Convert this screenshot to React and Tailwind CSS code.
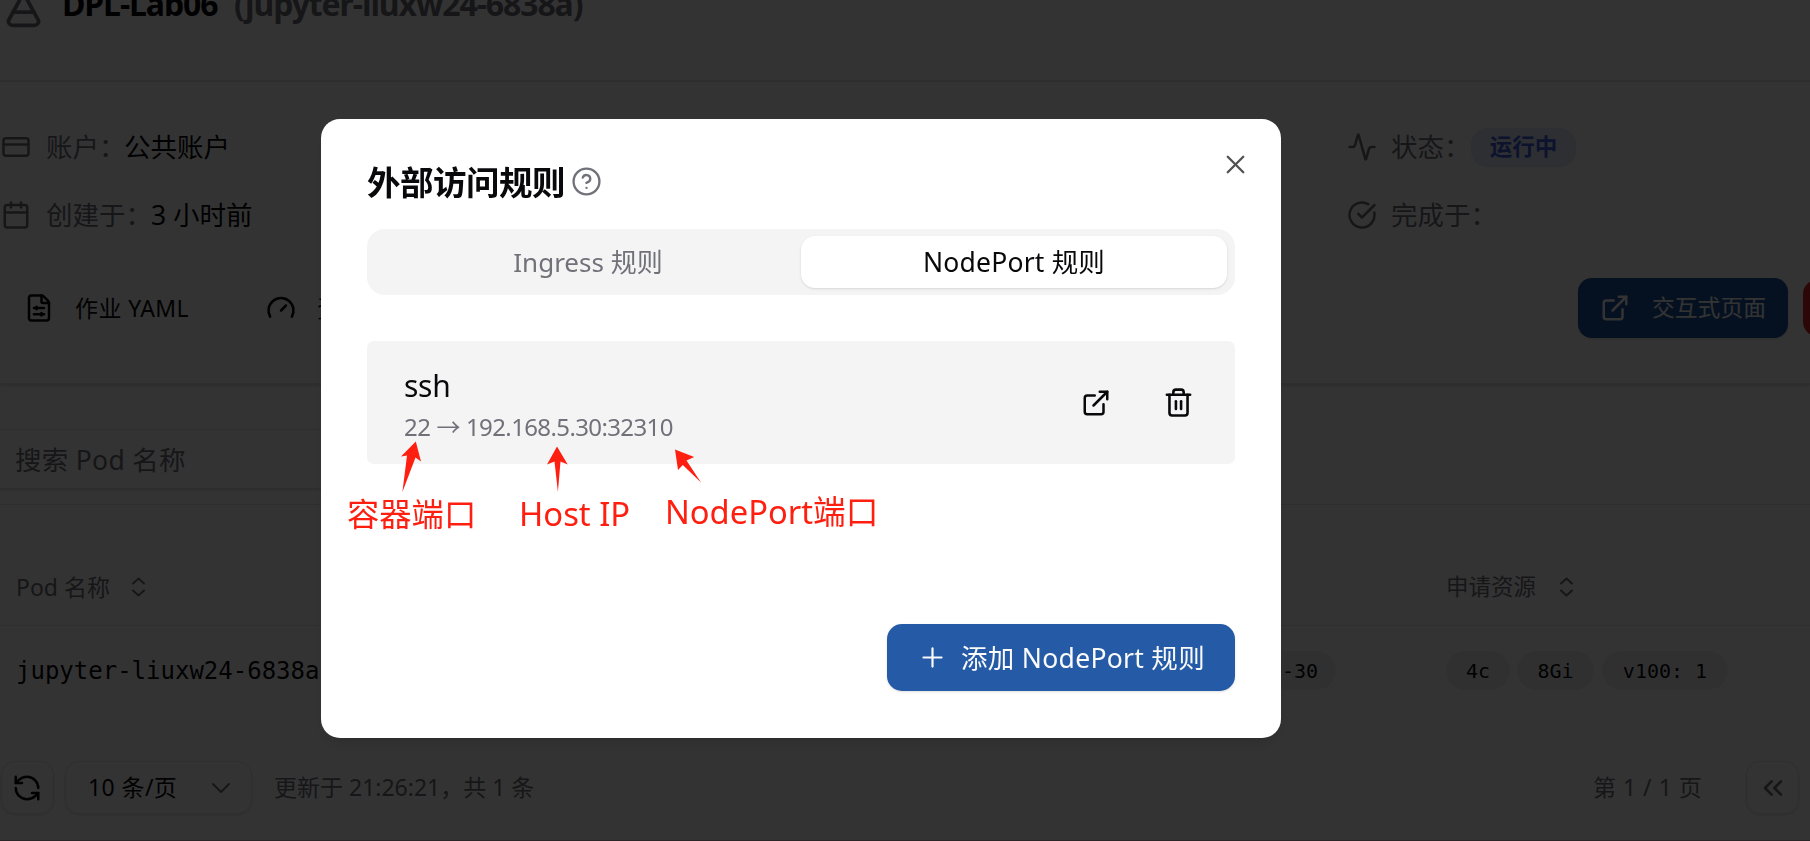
import React from "react";
import {
  Activity, Calendar, ChevronDown, ChevronsLeft, CircleCheckBig, CircleHelp, CreditCard,
  ExternalLink, FileSliders, FlaskConical, Gauge, Plus, RefreshCcw, Trash2, X,
} from "lucide-react";

function SortIcon() {
  return (
    <svg width="15" height="20" viewBox="0 0 15 20" fill="none" stroke="currentColor" strokeWidth="2" strokeLinecap="round" strokeLinejoin="round">
      <path d="M2 6.500 7.500 1.500 13 6.500M2 13.500l5.500 5L13 13.500" />
    </svg>
  );
}

function Badge({ children, className }) {
  return (
    <span className={"flex h-[39px] items-center justify-center rounded-[20px] bg-[#f1f1f2] font-['DejaVu_Sans_Mono',monospace] text-[20px] " + className}>
      {children}
    </span>
  );
}

function JobHeader() {
  return (
    <header className="flex h-[82px] items-start border-b-2 border-[#e4e4e7] pl-[1px]">
      <FlaskConical className="-mt-[16px] shrink-0 text-[#71717a]" size={45} strokeWidth={2} />
      <h1 className="-mt-[18px] ml-[16px] flex text-[32px] leading-[44px] font-bold tracking-[-1.1px]">
        <span className="w-[172px]">DPL-Lab06</span>
        <span className="text-[#71717a]">(jupyter-liuxw24-6838a)</span>
      </h1>
    </header>
  );
}

function JobInfo() {
  return (
    <section className="h-[303px] border-b-2 border-[#e4e4e7] pt-[31px] shadow-sm">
      <div className="flex h-[68px] items-center text-[26.5px]">
        <CreditCard className="ml-[1px] shrink-0 text-[#71717a]" size={30} />
        <span className="ml-[15px] w-[78px] shrink-0 pt-[2px] text-[#71717a]">账户：</span>
        <span className="w-[1223px] shrink-0 pt-[2px]">公共账户</span>
        <Activity className="shrink-0 text-[#71717a]" size={30} />
        <span className="ml-[14px] w-[80px] shrink-0 pt-[2px] text-[#71717a]">状态：</span>
        <span className="flex h-[39px] w-[105px] shrink-0 items-center justify-center rounded-[16px] bg-[#e4eafa] text-[22.5px] font-bold text-[#4062e0]">运行中</span>
      </div>
      <div className="flex h-[68px] items-center text-[26.5px]">
        <Calendar className="ml-[1px] shrink-0 text-[#71717a]" size={30} />
        <span className="ml-[15px] w-[105px] shrink-0 pt-[2px] text-[#71717a]">创建于：</span>
        <span className="w-[1196px] shrink-0 pt-[2px]">3 小时前</span>
        <CircleCheckBig className="shrink-0 text-[#71717a]" size={30} />
        <span className="ml-[14px] shrink-0 pt-[2px] text-[#71717a]">完成于：</span>
      </div>
      <div className="mt-[29px] flex h-[60px] items-center text-[23px]">
        <FileSliders className="ml-[24px] shrink-0" size={30} />
        <span className="ml-[21px] w-[191px] shrink-0 tracking-[0.4px]">作业 YAML</span>
        <Gauge className="shrink-0" size={30} />
        <span className="ml-[21px] w-[1261px] shrink-0">资源监控</span>
        <button className="flex h-[60px] w-[210px] shrink-0 items-center rounded-[14px] bg-[#1a56a0] pl-[22px] text-white shadow-sm">
          <ExternalLink size={30} />
          <span className="ml-[22px] text-[22.8px]">交互式页面</span>
        </button>
        <div className="ml-[15px] h-[56px] w-[60px] shrink-0 rounded-[14px] bg-[#dc2626]" />
      </div>
    </section>
  );
}

function PodTable() {
  return (
    <section>
      <div className="h-[119px] pt-[44px]">
        <div className="-ml-[2px] flex h-[60px] w-[600px] items-center border border-[#e4e4e7] pt-[3px] pl-[16px] text-[26.5px] tracking-[0.300px] text-[#71717a] shadow-sm">搜索 Pod 名称</div>
      </div>
      <div className="flex h-[122px] items-center border-y border-[#e4e4e7] pt-[44px] text-[23px] text-[#71717a]">
        <span className="ml-[16px] w-[115px]">Pod 名称</span>
        <SortIcon />
        <span className="ml-[1300px] w-[113px] text-[22.5px]">申请资源</span>
        <SortIcon />
      </div>
      <div className="flex h-[89px] items-center">
        <span className="ml-[16px] w-[1200px] font-['DejaVu_Sans_Mono',monospace] text-[24px]">jupyter-liuxw24-6838a</span>
        <Badge className="w-[120px]">node-30</Badge>
        <Badge className="ml-[110px] w-[64px]">4c</Badge>
        <Badge className="ml-[7px] w-[77px]">8Gi</Badge>
        <Badge className="ml-[8px] w-[126px]">v100: 1</Badge>
      </div>
    </section>
  );
}

function Pager() {
  return (
    <footer className="mt-[46px] flex h-[53px] items-center text-[23px]">
      <button className="ml-[1px] flex h-[53px] w-[53px] items-center justify-center rounded-[14px] border border-[#e4e4e7] pr-[2px] shadow-sm">
        <RefreshCcw size={30} />
      </button>
      <button className="ml-[11px] flex h-[53px] w-[187px] items-center rounded-[14px] border border-[#e4e4e7] pl-[22px] shadow-sm">
        <span className="w-[117px] text-left tracking-[0.400px]">10 条/页</span>
        <ChevronDown className="text-[#71717a]" size={32} strokeWidth={1.5} />
      </button>
      <span className="ml-[22px] w-[1319px] text-[#71717a]">更新于 21:26:21，共 1 条</span>
      <span className="w-[153px] tracking-[0.500px] text-[#71717a]">第 1 / 1 页</span>
      <button className="flex h-[53px] w-[53px] items-center justify-center rounded-[14px] border border-[#e4e4e7] text-[#71717a] shadow-sm">
        <ChevronsLeft size={32} />
      </button>
    </footer>
  );
}

function Annotations() {
  return (
    <div className="pointer-events-none absolute top-0 left-0 text-[#ff1f10]">
      <svg className="absolute top-0 left-0" width="960" height="619" fill="currentColor">
        <path d="M94.800 322.500 100 342.500 94.500 338.500 81.400 373 86 336.500 80 337.500Z" />
        <path d="M236 327.500 246.700 345.500 239.500 342.500 236.900 373 233.500 342.500 226 345.500Z" />
        <path d="M354 330.500 373.200 338 365.500 341.500 380 363.500 361.800 346 357 351Z" />
      </svg>
      <span className="absolute top-[374px] left-[26px] text-[32.3px] leading-[40px] whitespace-nowrap">容器端口</span>
      <span className="absolute top-[375px] left-[198px] text-[32.8px] leading-[40px] whitespace-nowrap">Host IP</span>
      <span className="absolute top-[373px] left-[344px] text-[32.7px] leading-[40px] whitespace-nowrap">NodePort端口</span>
    </div>
  );
}

function RulesDialog() {
  return (
    <div className="fixed inset-0 flex items-start bg-black/80 pt-[118.5px] pl-[321px]">
      <div className="relative h-[619px] w-[960px] rounded-[19px] bg-white px-[46px] shadow-lg">
        <X className="absolute top-[30px] right-[30px] text-[#525254]" size={31} strokeWidth={1.8} />
        <div className="flex h-[110.5px] items-center pt-[17px]">
          <h2 className="w-[204px] text-[33.5px] leading-[40px] font-bold tracking-[-0.5px]">外部访问规则</h2>
          <CircleHelp className="-mt-[1px] text-[#71717a]" size={31} strokeWidth={1.8} />
        </div>
        <div className="flex h-[66px] items-center justify-between rounded-[18px] bg-[#f4f4f5] px-[8px] text-[26px]">
          <span className="flex h-[52px] w-[426px] items-center justify-center text-[#71717a]">Ingress 规则</span>
          <span className="flex h-[52px] w-[426px] items-center justify-center rounded-[14px] bg-white pt-[2px] text-[26.5px] tracking-[0.200px] shadow">NodePort 规则</span>
        </div>
        <div className="mt-[46px] flex h-[123px] items-center rounded-[7px] bg-[#f4f4f5] pl-[37px]">
          <div className="w-[677px] pt-[7px]">
            <div className="text-[30px] leading-[42px] tracking-[-0.300px]">ssh</div>
            <div className="flex text-[24px] leading-[40px] text-[#71717a]">
              <span className="w-[62px] tracking-[-0.400px]">22 →</span>
              <span className="tracking-[-0.620px]">192.168.5.30:32310</span>
            </div>
          </div>
          <ExternalLink size={30} />
          <Trash2 className="ml-[52px]" size={31} />
        </div>
        <div className="mt-[160px] flex justify-end">
          <button className="flex h-[67px] w-[348px] items-center rounded-[15px] bg-[#255ba6] pl-[30px] text-[26.5px] tracking-[0.300px] text-[#fafafa] shadow">
            <Plus size={31} strokeWidth={1.7} />
            <span className="ml-[13px] pt-[2px] whitespace-nowrap">添加 NodePort 规则</span>
          </button>
        </div>
        <Annotations />
      </div>
    </div>
  );
}

export default function App() {
  return (
    <div className="h-[841px] w-[1810px] overflow-hidden border-b border-[#d2bfc4] bg-white font-['Noto_Sans','Noto_Sans_CJK_SC',sans-serif] whitespace-nowrap text-[#09090b]">
      <JobHeader />
      <JobInfo />
      <PodTable />
      <Pager />
      <RulesDialog />
    </div>
  );
}
